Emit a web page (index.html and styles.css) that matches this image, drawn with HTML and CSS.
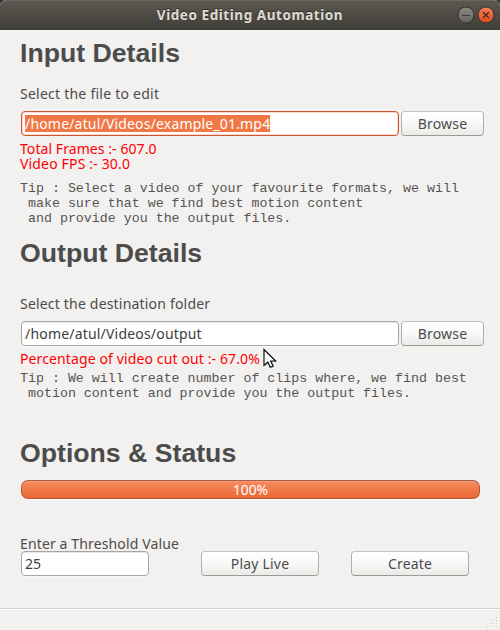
FILE: index.html
```
<!DOCTYPE html>
<html lang="en">
<head>
<meta charset="utf-8">
<title>Video Editing Automation</title>
<link rel="stylesheet" href="styles.css">
</head>
<body>
<div class="window">
  <header class="titlebar">
    <span class="title">Video Editing Automation</span>
    <svg class="controls" width="40" height="20" viewBox="0 0 40 20">
      <defs>
        <linearGradient id="gray" x2="0" y2="1"><stop stop-color="#8b8982"/><stop offset="1" stop-color="#65635d"/></linearGradient>
        <linearGradient id="orange" x2="0" y2="1"><stop stop-color="#f58260"/><stop offset="1" stop-color="#df4817"/></linearGradient>
      </defs>
      <circle cx="10" cy="10" r="8" fill="url(#gray)" stroke="#34332e"/>
      <path d="M6 10.500h8" stroke="#393832" fill="none"/>
      <circle cx="30" cy="10" r="8" fill="url(#orange)" stroke="#34332e"/>
      <path d="M27 7l6 6M33 7l-6 6" stroke="#49291c" stroke-width="1.300" fill="none"/>
    </svg>
  </header>
  <main class="content">
    <section class="input-section">
      <h1>Input Details</h1>
      <p class="label"><span class="t-file">Select the file to edit</span></p>
      <div class="row">
        <div class="field focused"><span class="selection t-path">/home/atul/Videos/example_01.mp4</span></div>
        <button class="button"><span class="t-browse">Browse</span></button>
      </div>
      <div class="info"><p class="t-frames">Total Frames :- 607.0</p><p class="t-fps">Video FPS :- 30.0</p></div>
      <pre class="tip">Tip : Select a video of your favourite formats, we will
 make sure that we find best motion content
 and provide you the output files.</pre>
    </section>
    <section class="output-section">
      <h1>Output Details</h1>
      <p class="label"><span class="t-folder">Select the destination folder</span></p>
      <div class="row">
        <div class="field"><span class="t-output">/home/atul/Videos/output</span></div>
        <button class="button"><span class="t-browse">Browse</span></button>
      </div>
      <div class="info"><p class="t-percent">Percentage of video cut out :- 67.0%</p></div>
      <pre class="tip">Tip : We will create number of clips where, we find best
 motion content and provide you the output files.</pre>
    </section>
    <section class="options-section">
      <h1>Options &amp; Status</h1>
      <div class="progress"><span>100%</span></div>
      <p class="label"><span class="t-threshold">Enter a Threshold Value</span></p>
      <div class="actions">
        <div class="field"><span>25</span></div>
        <button class="button"><span class="t-play">Play Live</span></button>
        <button class="button"><span class="t-create">Create</span></button>
      </div>
    </section>
  </main>
  <footer class="statusbar">
    <svg width="12" height="12" viewBox="0 0 12 12" fill="#c9c7c4">
      <path d="M9 0h1v1h-1zM6 3h1v1h-1zM9 3h1v1h-1zM3 6h1v1h-1zM6 6h1v1h-1zM9 6h1v1h-1zM0 9h1v1h-1zM3 9h1v1h-1zM6 9h1v1h-1zM9 9h1v1h-1z"/>
      <path fill="#fff" d="M10 1h1v1h-1zM7 4h1v1h-1zM10 4h1v1h-1zM4 7h1v1h-1zM7 7h1v1h-1zM10 7h1v1h-1zM1 10h1v1h-1zM4 10h1v1h-1zM7 10h1v1h-1zM10 10h1v1h-1z"/>
    </svg>
  </footer>
  <svg class="cursor" width="16" height="23" viewBox="0 0 16 23">
    <path d="M2 2.500v16l3.900-3.500 2.400 5.300 2.900-1.300-2.400-5h5z" fill="#777" opacity=".45"/>
    <path d="M1 1.500v16l3.800-3.500 2.400 5.300 2.900-1.300-2.400-5h4.900z" fill="#fff" stroke="#111" stroke-width="1.200"/>
  </svg>
</div>
</body>
</html>
```
FILE: styles.css
```
* { box-sizing: border-box; }
body {
  margin: 0;
  background: #2b3038;
  color: #4c4c4c;
  font: 14px/20px "Noto Sans", sans-serif;
}
h1, p, pre { margin: 0; }
.window {
  position: relative;
  display: flex;
  flex-direction: column;
  width: 500px;
  height: 630px;
  overflow: hidden;
  border-radius: 6px 6px 0 0;
  background: #f2f1ef;
}
.titlebar {
  display: grid;
  grid-template-columns: 44px 1fr 44px;
  align-items: center;
  height: 30px;
  flex: none;
  background: linear-gradient(#5b5850, #3e3d37);
  border-top: 1px solid #69675f;
}
.title {
  grid-column: 2;
  text-align: center;
  color: #dfdbd2;
  font-weight: 700;
  font-size: 13.5px;
  letter-spacing: .56px;
  margin-top: -2px;
  white-space: nowrap;
  text-shadow: 0 -1px 0 #2f2e29;
}
.controls { margin-top: -1px; }
.content { flex: 1; padding: 0 16px 0 20px; }
.input-section { height: 200px; }
.output-section { height: 200px; }
h1 {
  height: 46px;
  font: 700 26.67px/46px "Liberation Sans", Arial, sans-serif;
  white-space: nowrap;
}
.label { height: 20px; white-space: nowrap; }
.input-section .label { margin-top: 8px; }
.output-section .label { margin-top: 18px; }
.row {
  display: grid;
  grid-template-columns: 379px 83px;
  gap: 2px;
  margin-top: 7px;
}
.field, .button {
  display: flex;
  align-items: center;
  height: 25px;
  border: 1px solid #aaa59f;
  border-radius: 4px;
  white-space: nowrap;
}
.field {
  margin-left: 1px;
  padding-left: 3px;
  background: #fff;
  color: #3c3c3c;
  box-shadow: inset 0 1px #e9e8e6, 0 1px #f8f8f7;
}
.field.focused { border-color: #cb5731; box-shadow: inset 0 0 0 1px #fbd8c9; }
.selection {
  height: 17px;
  line-height: 18px;
  background: #f07746;
  color: #fff;
}
.button {
  justify-content: center;
  padding: 0;
  background: linear-gradient(#fff, #f9f9f9 45%, #ebeae8);
  border-color: #c5c2be #b1ada8 #9c9892;
  color: #4c4c4c;
  font: inherit;
}
.info { margin-top: 5px; color: #f00; line-height: 15px; white-space: nowrap; }
.tip {
  margin-top: 10px;
  font: 13.3px/15px "Liberation Mono", monospace;
  color: #555;
}
.output-section .tip { margin-top: 5px; }
.progress {
  display: flex;
  align-items: center;
  justify-content: center;
  width: 459px;
  height: 19px;
  margin: 4px 0 0 1px;
  border: 1px solid #b9562f;
  border-top-color: #a46048;
  border-radius: 7px;
  background: linear-gradient(#f98d62, #f17b4b 45%, #e76834);
  color: #fff;
  font-size: 13.8px;
  box-shadow: inset 0 1px #fa9a74, 0 1px #fff;
}
.options-section .label { margin-top: 35px; height: 17px; }
.actions { display: flex; padding-left: 1px; }
.actions .field { width: 128px; margin: 0 52px 0 0; }
.actions .button { width: 118px; margin-right: 32px; flex: none; }
.actions .button:last-child { margin: 0; }
.statusbar {
  display: flex;
  justify-content: flex-end;
  align-items: flex-end;
  flex: none;
  height: 22px;
  padding: 0 1px 1px;
  border-top: 1px solid #d3d1ce;
  box-shadow: inset 0 1px #fff;
}
.cursor { position: absolute; left: 263px; top: 348px; }
.t-file { letter-spacing: .24px; }
.t-path { letter-spacing: .18px; }
.t-frames { letter-spacing: .07px; }
.t-fps { letter-spacing: .16px; }
.t-percent { letter-spacing: .12px; }
.t-folder, .t-output { letter-spacing: .19px; }
.t-threshold { letter-spacing: .13px; }
.t-browse, .t-play { letter-spacing: .2px; }
.t-create { letter-spacing: .15px; }
```
